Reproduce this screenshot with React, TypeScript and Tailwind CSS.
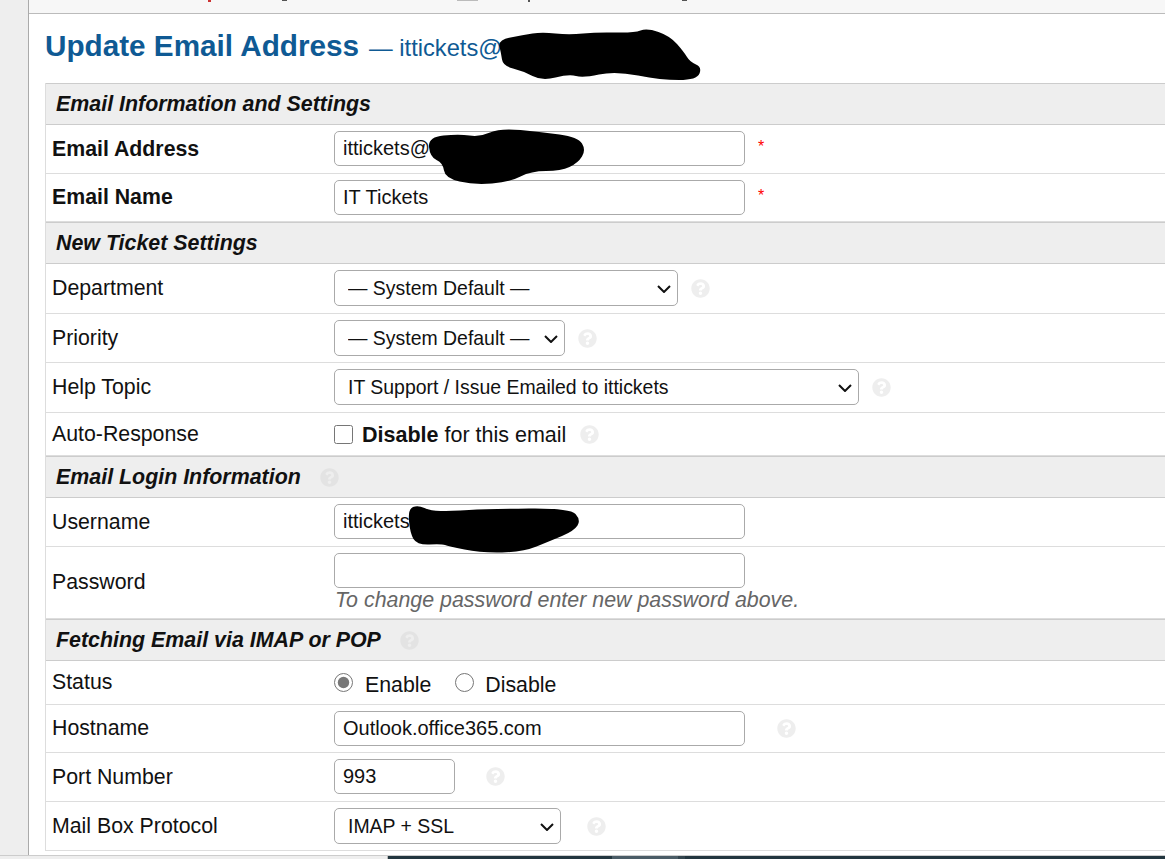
import type { ReactNode } from 'react';
import { FaQuestionCircle } from 'react-icons/fa';

const inputClass =
  'h-[35px] rounded-[5px] border border-[#aaa] bg-white pl-[8px] text-[20px] text-[#111] outline-none';

function Help({ className = 'text-[#eeeeee]' }: { className?: string }) {
  return <FaQuestionCircle className={`h-[19px] w-[19px] shrink-0 ${className}`} />;
}

function SectionHeader({ title, help }: { title: string; help?: boolean }) {
  return (
    <div className="flex h-[42px] items-center border-y border-[#ccc] bg-[#eee] pl-[10px] pt-[2px] text-[21.4px] font-bold italic leading-none text-[#111]">
      {title}
      {help && <Help className="ml-[19px] mb-[2px] text-[#e3e3e3]" />}
    </div>
  );
}

function Row({
  label,
  bold,
  heightClass,
  padClass = 'pt-[6px]',
  children,
}: {
  label: string;
  bold?: boolean;
  heightClass: string;
  padClass?: string;
  children: ReactNode;
}) {
  return (
    <div className={`flex border-b border-[#ddd] ${heightClass}`}>
      <div
        className={`flex w-[288px] shrink-0 items-center pl-[6px] pt-[1px] text-[21.3px] leading-none text-[#111] ${
          bold ? 'font-bold' : ''
        }`}
      >
        {label}
      </div>
      <div className={`flex min-w-0 flex-1 items-start ${padClass}`}>
        <div className="flex items-center">{children}</div>
      </div>
    </div>
  );
}

function Required() {
  return <span className="ml-[13px] mb-[4px] text-[16px] leading-none text-[#f00]">*</span>;
}

function Select({ widthClass, value }: { widthClass: string; value: string }) {
  return (
    <div className={`relative ${widthClass}`}>
      <select className="h-[36px] w-full appearance-none rounded-[5px] border border-[#aaa] bg-white pl-[13px] pt-[2px] text-[19.45px] text-[#111] outline-none">
        <option>{value}</option>
      </select>
      <svg
        className="pointer-events-none absolute right-[7px] top-[15px]"
        width="14"
        height="8"
        viewBox="0 0 14 8"
        fill="none"
        stroke="#111"
        strokeWidth="2"
      >
        <polyline points="1,1 7,7 13,1" />
      </svg>
    </div>
  );
}

// rounds the corners of a hand-drawn marker blob
function blob(points: number[][]) {
  const mid = (a: number[], b: number[]) => `${(a[0] + b[0]) / 2} ${(a[1] + b[1]) / 2}`;
  let d = `M${mid(points[points.length - 1], points[0])}`;
  points.forEach((p, i) => {
    d += ` Q${p[0]} ${p[1]} ${mid(p, points[(i + 1) % points.length])}`;
  });
  return d + 'Z';
}

const titleBlob = [
  [498, 40], [523, 35], [542, 32], [569, 35], [597, 32], [634, 33], [647, 28], [670, 36], [684, 52], [690, 62],
  [702, 67], [697, 80], [661, 80], [615, 71], [583, 78], [569, 74], [542, 81], [523, 71], [503, 66], [501, 53],
];
const addressBlob = [
  [428, 137], [459, 134], [480, 137], [500, 128], [541, 132], [578, 137], [586, 150], [578, 163], [561, 171], [531, 171],
  [510, 182], [474, 185], [445, 178], [443, 163], [430, 157],
];
const usernameBlob = [
  [408, 509], [418, 505], [431, 511], [450, 511], [488, 509], [570, 508], [581, 520], [574, 531], [550, 541], [523, 552],
  [481, 553], [448, 546], [442, 544], [417, 545], [410, 533],
];

function Redactions() {
  return (
    <svg
      className="pointer-events-none absolute left-0 top-0"
      width="1165"
      height="859"
      viewBox="0 0 1165 859"
      fill="#000"
    >
      <path d={blob(titleBlob)} />
      <path d={blob(addressBlob)} />
      <path d={blob(usernameBlob)} />
    </svg>
  );
}

export default function App() {
  return (
    <div className="relative flex h-[859px] w-[1165px] flex-col overflow-hidden bg-[#eee] font-['Liberation_Sans',Arial,sans-serif]">
      <div className="flex min-h-0 flex-1">
        <div className="w-[28px] shrink-0 bg-[#eee]" />
        <div className="flex min-w-0 flex-1 flex-col border-l border-[#aaa] bg-white">
          <div className="relative h-[14px] shrink-0 border-b border-[#bbb] bg-[#f7f7f7]">
            <span className="absolute left-[179px] top-0 h-[2px] w-[3px] bg-[#c33]" />
            <span className="absolute left-[253px] top-0 h-[1px] w-[5px] bg-[#555]" />
            <span className="absolute left-[428px] top-0 h-[1px] w-[21px] bg-[#bbb]" />
            <span className="absolute left-[499px] top-0 h-[2px] w-[2px] bg-[#555]" />
            <span className="absolute left-[653px] top-0 h-[1px] w-[5px] bg-[#555]" />
          </div>
          <div className="min-h-0 flex-1 pl-[16px]">
            <h2 className="flex h-[69px] items-baseline pt-[15px] text-[29.7px] font-bold leading-[34px] text-[#0f5a94]">
              Update Email Address
              <span className="ml-[10px] text-[23.7px] font-normal">— ittickets@</span>
            </h2>
            <div className="border-l border-[#ddd]">
              <SectionHeader title="Email Information and Settings" />
              <Row label="Email Address" bold heightClass="h-[49px]">
                <input className={`${inputClass} w-[411px]`} defaultValue="ittickets@" />
                <Required />
              </Row>
              <Row label="Email Name" bold heightClass="h-[48px]">
                <input className={`${inputClass} w-[411px]`} defaultValue="IT Tickets" />
                <Required />
              </Row>
              <SectionHeader title="New Ticket Settings" />
              <Row label="Department" heightClass="h-[50px]">
                <Select widthClass="w-[344px]" value="— System Default —" />
                <Help className="ml-[13px] text-[#eeeeee]" />
              </Row>
              <Row label="Priority" heightClass="h-[49px]">
                <Select widthClass="w-[231px]" value="— System Default —" />
                <Help className="ml-[13px] text-[#eeeeee]" />
              </Row>
              <Row label="Help Topic" heightClass="h-[50px]">
                <Select widthClass="w-[525px]" value="IT Support / Issue Emailed to ittickets" />
                <Help className="ml-[13px] text-[#eeeeee]" />
              </Row>
              <Row label="Auto-Response" heightClass="h-[43px]" padClass="pt-[10px]">
                <input type="checkbox" className="h-[19px] w-[19px]" />
                <span className="ml-[9px] mt-[2px] text-[21.5px] leading-none text-[#111]">
                  <b>Disable</b> for this email
                </span>
                <Help className="ml-[14px] text-[#eeeeee]" />
              </Row>
              <SectionHeader title="Email Login Information" help />
              <Row label="Username" heightClass="h-[49px]">
                <input className={`${inputClass} w-[411px]`} defaultValue="ittickets" />
              </Row>
              <Row label="Password" heightClass="h-[72px]">
                <div className="flex flex-col">
                  <input type="password" className={`${inputClass} w-[411px]`} />
                  <em className="ml-[1px] mt-[1px] text-[21.4px] leading-[23px] text-[#666]">
                    To change password enter new password above.
                  </em>
                </div>
              </Row>
              <SectionHeader title="Fetching Email via IMAP or POP" help />
              <Row label="Status" heightClass="h-[44px]" padClass="pt-[10px]">
                <label className="flex items-center text-[21.3px] leading-none text-[#111]">
                  <input type="radio" name="status" defaultChecked className="mb-[2px] h-[19px] w-[19px] accent-[#777]" />
                  <span className="ml-[12px] mt-[4px]">Enable</span>
                </label>
                <label className="ml-[24px] flex items-center text-[21.3px] leading-none text-[#111]">
                  <input type="radio" name="status" className="mb-[2px] h-[19px] w-[19px]" />
                  <span className="ml-[11px] mt-[4px]">Disable</span>
                </label>
              </Row>
              <Row label="Hostname" heightClass="h-[48px]">
                <input className={`${inputClass} w-[411px]`} defaultValue="Outlook.office365.com" />
                <Help className="ml-[32px] text-[#eeeeee]" />
              </Row>
              <Row label="Port Number" heightClass="h-[49px]">
                <input className={`${inputClass} w-[121px]`} defaultValue="993" />
                <Help className="ml-[31px] text-[#eeeeee]" />
              </Row>
              <Row label="Mail Box Protocol" heightClass="h-[49px]">
                <Select widthClass="w-[227px]" value="IMAP + SSL" />
                <Help className="ml-[26px] text-[#eeeeee]" />
              </Row>
            </div>
          </div>
        </div>
      </div>
      <div className="flex h-[4px] shrink-0 border-t border-[#ccc]">
        <div className="w-[388px] border-r border-[#bbb] bg-[#eee]" />
        <div className="w-[224px] bg-[#22363f]" />
        <div className="w-[66px] bg-[#4a5c66]" />
        <div className="w-[7px] bg-[#33454e]" />
        <div className="flex-1 bg-[#22363f]" />
      </div>
      <Redactions />
    </div>
  );
}
